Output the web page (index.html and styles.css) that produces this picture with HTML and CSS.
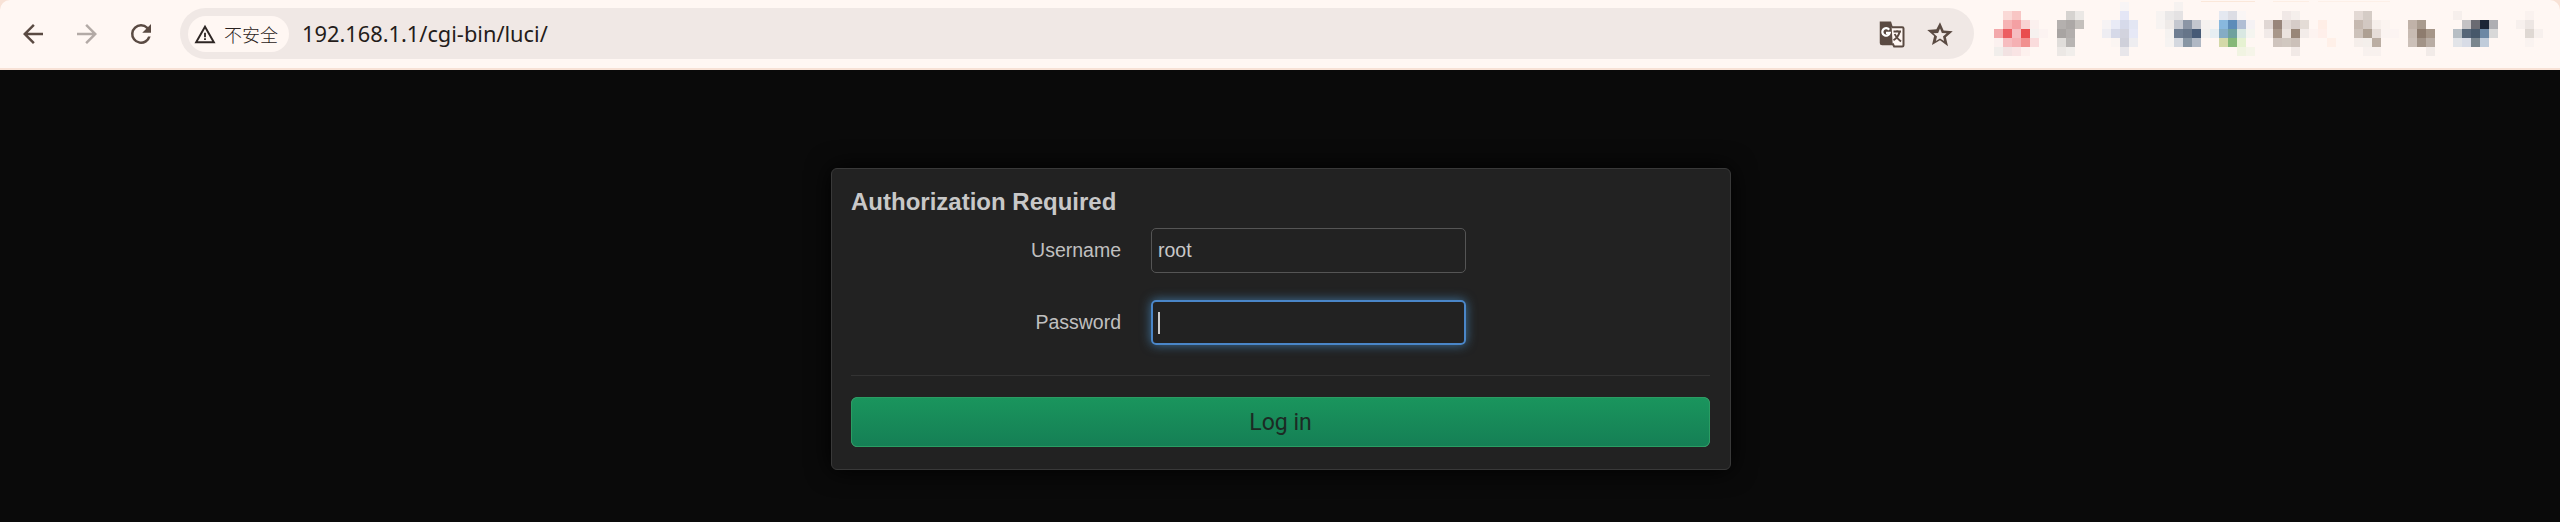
FILE: index.html
```html
<!DOCTYPE html>
<html lang="zh-CN">

<head>
    <meta charset="UTF-8">
    <meta name="viewport" content="width=device-width, initial-scale=1.0">
    <title>Authorization Required</title>
    <link rel="stylesheet" href="styles.css">
</head>

<body>
    <div class="chrome">
        <header class="toolbar">
            <div class="nav-buttons">
                <svg class="nav-icon" viewBox="0 0 24 24"><path d="M20 11H7.800l5.600-5.600L12 4l-8 8 8 8 1.400-1.400L7.800 13H20z"/></svg>
                <svg class="nav-icon nav-icon-off" viewBox="0 0 24 24"><path d="M4 11h12.200l-5.600-5.600L12 4l8 8-8 8-1.400-1.400 5.600-5.600H4z"/></svg>
                <svg class="nav-icon" viewBox="0 0 24 24"><path d="M17.650 6.350A7.960 7.960 0 0 0 12 4a8 8 0 1 0 7.740 10h-2.080A6 6 0 1 1 12 6c1.660 0 3.140.690 4.220 1.780L13 11h7V4z"/></svg>
            </div>
            <div class="omnibox">
                <div class="chip">
                    <svg class="warn-icon" viewBox="0 0 24 24"><path d="M12 2 .5 22h23zm0 4.200L19.800 20H4.200zM11 10.500v5h2v-5zm0 6v2h2v-2z" fill-rule="evenodd"/></svg>
                    <span class="chip-text">不安全</span>
                </div>
                <span class="url">192.168.1.1/cgi-bin/luci/</span>
                <svg class="box-icon" viewBox="0 0 24 24">
                    <path d="M3 2h9l6 19H5a2 2 0 0 1-2-2z"/>
                    <path class="translate-line" d="M12.500 6.500H21a1 1 0 0 1 1 1V21a1 1 0 0 1-1 1h-6.500l-1.200-2.500"/>
                    <path class="translate-g" d="M10.500 8.600A3 3 0 1 0 11 11H8"/>
                    <path class="translate-line" d="M14 10h6M17 9v1.500M19 10c-.8 3-2.500 5.500-5 7M15 12c.8 2 2 3.500 5 6"/>
                </svg>
                <svg class="box-icon" viewBox="0 0 24 24"><path d="M12 2.500l2.900 6.700 7.300.6-5.500 4.800 1.700 7.100L12 17l-6.400 3.700 1.700-7.100-5.500-4.800 7.300-.6zm0 5.100-1.500 3.500-3.800.3 2.900 2.500-.9 3.700 3.300-2 3.300 2-.9-3.700 2.900-2.500-3.800-.3z" fill-rule="evenodd"/></svg>
            </div>
            <!-- pixelated extension icons, one unit is one 9px cell -->
            <svg class="extensions" viewBox="0 -0.222 62.889 7.556" shape-rendering="crispEdges">
                <rect x="23" y="-0.111" width="6" height="0.111" fill="#fbe8da"/>
                <rect x="31" y="-0.111" width="4" height="0.111" fill="#fdeee4"/>
                <rect x="36" y="-0.111" width="8" height="0.111" fill="#fdf0e8"/>

                <rect x="1" y="1" width="1" height="1" fill="#fad9d6"/><rect x="2" y="1" width="1" height="1" fill="#f8c6c4"/>
                <rect x="1" y="2" width="1" height="1" fill="#f6b3b4"/><rect x="2" y="2" width="1" height="1" fill="#f4a0a3"/><rect x="3" y="2" width="1" height="1" fill="#f9d2d2"/><rect x="4" y="2" width="1" height="1" fill="#fbf0ee"/>
                <rect x="0" y="3" width="1" height="1" fill="#f3a9ab"/><rect x="1" y="3" width="1" height="1" fill="#ec5e62"/><rect x="2" y="3" width="1" height="1" fill="#f5bcc0"/><rect x="3" y="3" width="1" height="1" fill="#e94d4e"/><rect x="4" y="3" width="1" height="1" fill="#f6f1ef"/><rect x="5" y="3" width="1" height="1" fill="#fcf3f1"/>
                <rect x="0" y="4" width="1" height="1" fill="#fbf1ef"/><rect x="1" y="4" width="1" height="1" fill="#f6bcbf"/><rect x="2" y="4" width="1" height="1" fill="#f5b0b3"/><rect x="3" y="4" width="1" height="1" fill="#f1908f"/><rect x="4" y="4" width="1" height="1" fill="#fadcdc"/>
                <rect x="0" y="5" width="1" height="1" fill="#f1eeeb"/><rect x="1" y="5" width="1" height="1" fill="#f2e2e2"/><rect x="2" y="5" width="1" height="1" fill="#f9e4e4"/><rect x="3" y="5" width="1" height="1" fill="#fdf1ee"/>

                <rect x="8" y="1" width="1" height="1" fill="#d6d3d0"/><rect x="9" y="1" width="1" height="1" fill="#ebe8e5"/>
                <rect x="7" y="2" width="1" height="1" fill="#b4b0ae"/><rect x="8" y="2" width="1" height="1" fill="#aca8a6"/><rect x="9" y="2" width="1" height="1" fill="#c4c0bc"/>
                <rect x="7" y="3" width="1" height="1" fill="#a8a4a2"/><rect x="8" y="3" width="1" height="1" fill="#b2aeac"/>
                <rect x="7" y="4" width="1" height="1" fill="#e0ddda"/><rect x="8" y="4" width="1" height="1" fill="#b8b5b3"/>
                <rect x="7" y="5" width="1" height="1" fill="#ece8e5"/><rect x="8" y="5" width="1" height="1" fill="#f1eeeb"/>

                <rect x="14" y="0" width="1" height="1" fill="#f8f5f6"/>
                <rect x="14" y="1" width="1" height="1" fill="#e4e6f6"/>
                <rect x="12" y="2" width="1" height="1" fill="#f6f3f4"/><rect x="13" y="2" width="1" height="1" fill="#e9ebf6"/><rect x="14" y="2" width="1" height="1" fill="#d6daea"/><rect x="15" y="2" width="1" height="1" fill="#e3e6f3"/>
                <rect x="12" y="3" width="1" height="1" fill="#eeedf2"/><rect x="13" y="3" width="1" height="1" fill="#d6d9e8"/><rect x="14" y="3" width="1" height="1" fill="#d2d3de"/><rect x="15" y="3" width="1" height="1" fill="#e6e8f6"/>
                <rect x="13" y="4" width="1" height="1" fill="#fbf5f2"/><rect x="14" y="4" width="1" height="1" fill="#cfd0da"/><rect x="15" y="4" width="1" height="1" fill="#eeedf0"/>
                <rect x="14" y="5" width="1" height="1" fill="#e8e6ea"/>

                <rect x="20" y="0" width="1" height="1" fill="#f6f2f0"/>
                <rect x="18" y="1" width="1" height="1" fill="#f7f3f1"/><rect x="19" y="1" width="1" height="1" fill="#eae8e8"/><rect x="20" y="1" width="1" height="1" fill="#e4e2e3"/>
                <rect x="18" y="2" width="1" height="1" fill="#f7f3f1"/><rect x="19" y="2" width="1" height="1" fill="#eeeae8"/><rect x="20" y="2" width="1" height="1" fill="#c4c7cf"/><rect x="21" y="2" width="1" height="1" fill="#8b95a5"/><rect x="22" y="2" width="1" height="1" fill="#c3c6ce"/><rect x="23" y="2" width="1" height="1" fill="#f5f2f0"/><rect x="24" y="2" width="1" height="1" fill="#f8f4f2"/>
                <rect x="19" y="3" width="1" height="1" fill="#f5f2f0"/><rect x="20" y="3" width="1" height="1" fill="#6f7e92"/><rect x="21" y="3" width="1" height="1" fill="#667589"/><rect x="22" y="3" width="1" height="1" fill="#465a76"/><rect x="23" y="3" width="1" height="1" fill="#f3f1ef"/>
                <rect x="19" y="4" width="1" height="1" fill="#f6f3f1"/><rect x="20" y="4" width="1" height="1" fill="#d4d8df"/><rect x="21" y="4" width="1" height="1" fill="#8896a4"/><rect x="22" y="4" width="1" height="1" fill="#b0b8c4"/>

                <rect x="25" y="1" width="1" height="1" fill="#e4e8f0"/><rect x="26" y="1" width="1" height="1" fill="#dcdde4"/><rect x="27" y="1" width="1" height="1" fill="#faf6f5"/>
                <rect x="25" y="2" width="1" height="1" fill="#88b8de"/><rect x="26" y="2" width="1" height="1" fill="#5d8cb9"/><rect x="27" y="2" width="1" height="1" fill="#b0bed4"/><rect x="28" y="2" width="1" height="1" fill="#f5f2f4"/>
                <rect x="24" y="3" width="1" height="1" fill="#e6eef2"/><rect x="25" y="3" width="1" height="1" fill="#84acc4"/><rect x="26" y="3" width="1" height="1" fill="#6fa19e"/><rect x="27" y="3" width="1" height="1" fill="#d9e8e2"/><rect x="28" y="3" width="1" height="1" fill="#f5f5f0"/>
                <rect x="25" y="4" width="1" height="1" fill="#d4d9a8"/><rect x="26" y="4" width="1" height="1" fill="#85b878"/><rect x="27" y="4" width="1" height="1" fill="#e6f2d2"/>
                <rect x="27" y="5" width="1" height="1" fill="#f1f4e2"/><rect x="28" y="5" width="1" height="1" fill="#f6f5e9"/>

                <rect x="32" y="1" width="1" height="1" fill="#f0e8e6"/><rect x="33" y="1" width="1" height="1" fill="#f5efec"/>
                <rect x="30" y="2" width="1" height="1" fill="#e0d7d4"/><rect x="31" y="2" width="1" height="1" fill="#98857a"/><rect x="32" y="2" width="1" height="1" fill="#e2d9d5"/><rect x="33" y="2" width="1" height="1" fill="#d6ccc8"/><rect x="34" y="2" width="1" height="1" fill="#e4dcd6"/>
                <rect x="30" y="3" width="1" height="1" fill="#f1eae8"/><rect x="31" y="3" width="1" height="1" fill="#a8978a"/><rect x="32" y="3" width="1" height="1" fill="#ebe3de"/><rect x="33" y="3" width="1" height="1" fill="#988678"/><rect x="34" y="3" width="1" height="1" fill="#f3ece9"/>
                <rect x="31" y="4" width="1" height="1" fill="#cfc4bd"/><rect x="32" y="4" width="1" height="1" fill="#d1c8c0"/><rect x="33" y="4" width="1" height="1" fill="#cbc0b9"/>
                <rect x="33" y="5" width="1" height="1" fill="#f1e9e6"/>

                <rect x="36" y="2" width="1" height="1" fill="#ffeee6"/>
                <rect x="35" y="3" width="1" height="1" fill="#fdf3f0"/><rect x="36" y="3" width="1" height="1" fill="#ffefea"/>
                <rect x="37" y="4" width="1" height="1" fill="#fff0e8"/>

                <rect x="40" y="1" width="1" height="1" fill="#e3d9d4"/><rect x="41" y="1" width="1" height="1" fill="#d5ccc6"/>
                <rect x="40" y="2" width="1" height="1" fill="#c6b9b0"/><rect x="41" y="2" width="1" height="1" fill="#d2c8c2"/><rect x="42" y="2" width="1" height="1" fill="#f6efeb"/><rect x="43" y="2" width="1" height="1" fill="#fbf4f0"/>
                <rect x="40" y="3" width="1" height="1" fill="#cdc2ba"/><rect x="41" y="3" width="1" height="1" fill="#aea093"/><rect x="42" y="3" width="1" height="1" fill="#e6ddd8"/><rect x="43" y="3" width="1" height="1" fill="#fbf4f1"/><rect x="44" y="3" width="1" height="1" fill="#fcf4f2"/>
                <rect x="40" y="4" width="1" height="1" fill="#f5eeea"/><rect x="41" y="4" width="1" height="1" fill="#f4efeb"/><rect x="42" y="4" width="1" height="1" fill="#bbaea3"/>
                <rect x="41" y="5" width="1" height="1" fill="#f8f1ee"/><rect x="42" y="5" width="1" height="1" fill="#f8f1ee"/>

                <rect x="46" y="2" width="1" height="1" fill="#c0b2a8"/><rect x="47" y="2" width="1" height="1" fill="#a99b8e"/>
                <rect x="46" y="3" width="1" height="1" fill="#c8bbb2"/><rect x="47" y="3" width="1" height="1" fill="#8e7c6e"/><rect x="48" y="3" width="1" height="1" fill="#a69688"/>
                <rect x="46" y="4" width="1" height="1" fill="#ccc0b8"/><rect x="47" y="4" width="1" height="1" fill="#a29387"/><rect x="48" y="4" width="1" height="1" fill="#b9ada4"/>
                <rect x="48" y="5" width="1" height="1" fill="#f2ebe8"/>

                <rect x="51" y="1" width="1" height="1" fill="#f6efec"/>
                <rect x="52" y="2" width="1" height="1" fill="#c4c2c4"/><rect x="53" y="2" width="1" height="1" fill="#6a6b72"/><rect x="54" y="2" width="1" height="1" fill="#1c2636"/><rect x="55" y="2" width="1" height="1" fill="#aeaeb2"/>
                <rect x="51" y="3" width="1" height="1" fill="#b7bec4"/><rect x="52" y="3" width="1" height="1" fill="#566678"/><rect x="53" y="3" width="1" height="1" fill="#46586a"/><rect x="54" y="3" width="1" height="1" fill="#6c88a4"/><rect x="55" y="3" width="1" height="1" fill="#d8d8d8"/>
                <rect x="51" y="4" width="1" height="1" fill="#e2e4e8"/><rect x="52" y="4" width="1" height="1" fill="#d8dce6"/><rect x="53" y="4" width="1" height="1" fill="#7a868e"/><rect x="54" y="4" width="1" height="1" fill="#c0ccda"/>

                <rect x="59" y="1" width="1" height="1" fill="#faf2ef"/>
                <rect x="58" y="2" width="1" height="1" fill="#f7f0ed"/><rect x="59" y="2" width="1" height="1" fill="#ede6e3"/>
                <rect x="59" y="3" width="1" height="1" fill="#dfd8d3"/><rect x="60" y="3" width="1" height="1" fill="#f7f0ed"/>
                <rect x="59" y="4" width="1" height="1" fill="#faf3f0"/>
            </svg>
        </header>
    </div>

    <main class="page">
        <form class="login-box">
            <h2 class="login-title">Authorization Required</h2>
            <div class="field">
                <label class="field-label">Username</label>
                <div class="input">root</div>
            </div>
            <div class="field">
                <label class="field-label">Password</label>
                <div class="input input-focus"><span class="caret"></span></div>
            </div>
            <div class="actions">
                <button class="login-button" type="button">Log in</button>
            </div>
        </form>
    </main>
</body>

</html>
```

FILE: styles.css
```css
html,
body {
    margin: 0;
    padding: 0;
    height: 100%;
    overflow: hidden;
    background-color: #0a0a0a;
}

body {
    font-family: "Liberation Sans", Arial, sans-serif;
}


.chrome {
    padding-bottom: 2px;
    background-color: #f8e2d6;
}

.toolbar {
    display: flex;
    align-items: center;
    height: 68px;
    background-color: #fff7f3;
    border-radius: 10px 10px 0 0;
}

.nav-buttons {
    display: flex;
    flex: none;
    align-items: center;
    gap: 24px;
    padding-left: 18px;
    width: 180px;
    box-sizing: border-box;
}

.nav-icon {
    width: 30px;
    height: 30px;
    fill: #5a4a42;
}

.nav-icon-off {
    fill: #b3aaa6;
}


.omnibox {
    display: flex;
    flex: none;
    align-items: center;
    width: 1794px;
    height: 51px;
    box-sizing: border-box;
    padding: 0 19px 0 8px;
    margin-bottom: 1px;
    border-radius: 26px;
    background-color: #f0e8e5;
}

.chip {
    display: flex;
    align-items: center;
    gap: 8px;
    height: 36px;
    padding-left: 6px;
    width: 101px;
    box-sizing: border-box;
    border-radius: 18px;
    background-color: #fff7f3;
}

.warn-icon {
    width: 22px;
    height: 22px;
    fill: #2e2624;
}

.chip-text {
    font-family: "Noto Sans CJK SC", sans-serif;
    font-size: 18px;
    font-weight: 300;
    color: #2a2220;
    white-space: nowrap;
}

.url {
    flex: 1;
    margin-left: 13px;
    font-family: "Noto Sans", sans-serif;
    font-size: 21.8px;
    color: #241c1a;
}

.box-icon {
    width: 30px;
    height: 30px;
    margin-left: 19px;
    fill: #5a4a42;
}

.translate-line {
    fill: #fff7f3;
    stroke: #5a4a42;
    stroke-width: 1.6;
}

.translate-g {
    fill: none;
    stroke: #fff;
    stroke-width: 1.8;
}

.extensions {
    flex: none;
    width: 566px;
    height: 68px;
    margin-left: 20px;
}


.page {
    display: flex;
    justify-content: center;
    padding: 98px 0 0 2px;
}

.login-box {
    width: 900px;
    height: 302px;
    box-sizing: border-box;
    padding: 18px 20px 0 19px;
    background-color: #222;
    border: 1px solid #393939;
    border-radius: 6px;
    box-shadow: 0 0 24px #000;
}

.login-title {
    margin: 0 0 11px;
    font-size: 24px;
    line-height: 30px;
    font-weight: bold;
    color: #c8c8c8;
}

.field {
    display: flex;
    align-items: center;
    margin-bottom: 27px;
}

.field-label {
    width: 270px;
    text-align: right;
    font-size: 19.5px;
    color: #c0c0c0;
}

.input {
    display: flex;
    align-items: center;
    width: 315px;
    height: 45px;
    margin-left: 30px;
    padding: 0 6px;
    box-sizing: border-box;
    border: 1px solid #555;
    border-radius: 5px;
    font-size: 19.5px;
    color: #c8c8c8;
}

.input-focus {
    padding: 0 5px;
    border: 2px solid #4a86c8;
    box-shadow: 0 0 11px rgba(82, 168, 236, 0.6);
}

.caret {
    width: 2px;
    height: 22px;
    background-color: #ccc;
}

.actions {
    margin-top: 30px;
    padding-top: 21px;
    border-top: 1px solid #333;
}

.login-button {
    display: block;
    width: 100%;
    height: 50px;
    padding: 0;
    border: 1px solid #2a9d63;
    border-radius: 6px;
    background-image: linear-gradient(#1a955d, #157f55);
    font-family: Roboto, sans-serif;
    font-size: 23px;
    color: #1c2a24;
}
```
